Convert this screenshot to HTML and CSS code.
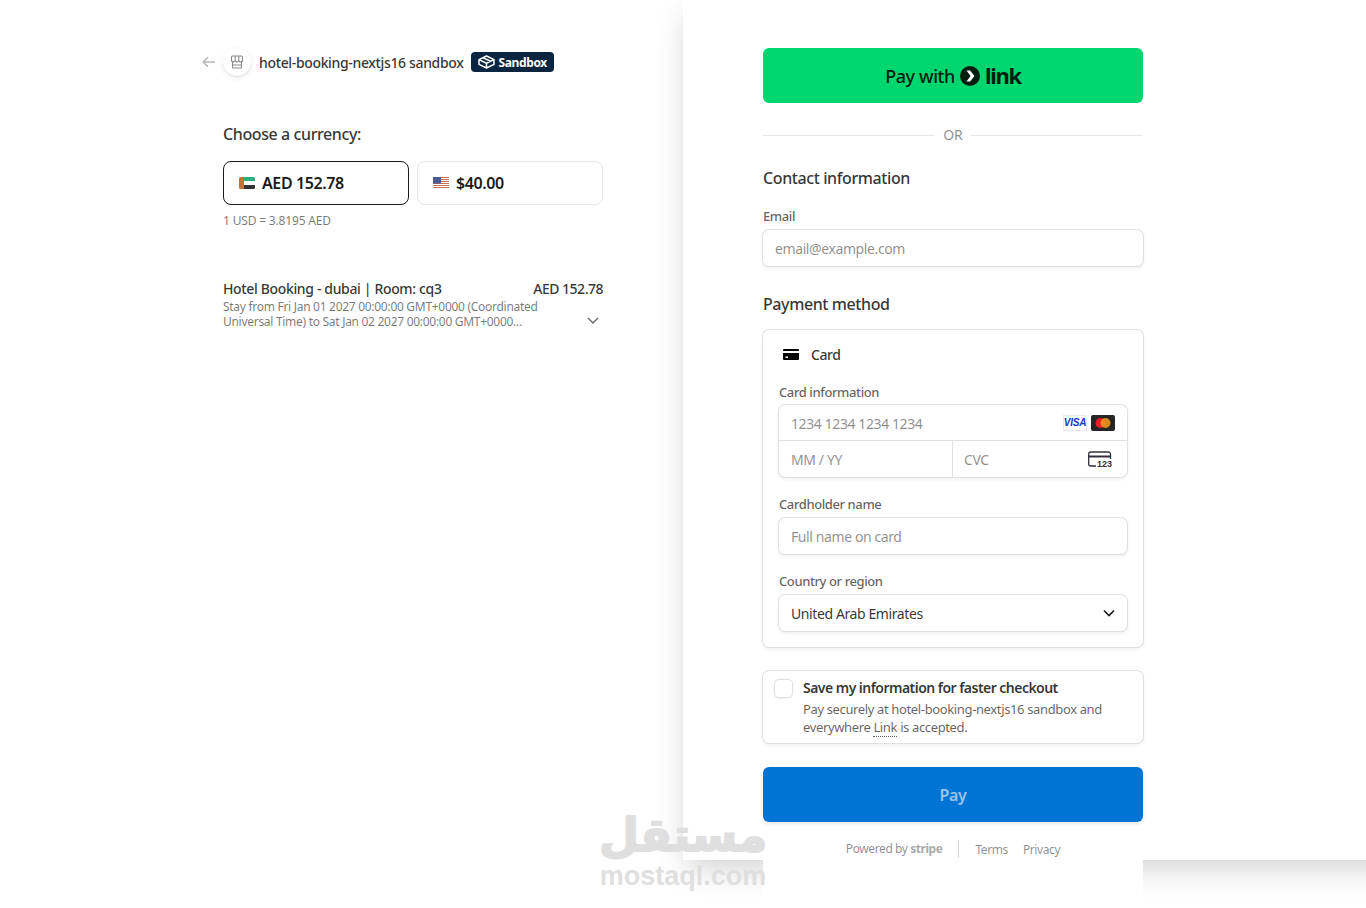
FILE: index.html
```html
<!DOCTYPE html>
<html lang="en">
<head>
<meta charset="utf-8">
<title>Checkout</title>
<link rel="stylesheet" href="styles.css">
</head>
<body>
<main class="page">
  <section class="summary">
    <header class="merchant">
      <svg class="back" width="14" height="12" viewBox="0 0 14 12"><path d="M13 6H1.500M6 1.200 1.200 6 6 10.800" fill="none" stroke="#b5b5b5" stroke-width="1.500"/></svg>
      <span class="store">
        <svg width="14" height="14" viewBox="0 0 14 14"><path d="M2.500 1h9a1 1 0 0 1 1 1v3.500a1.500 1.500 0 0 1-1 1.400V12a1 1 0 0 1-1 1H3.500a1 1 0 0 1-1-1V6.900a1.500 1.500 0 0 1-1-1.400V2a1 1 0 0 1 1-1zM5.200 1v5.500M8.800 1v5.500M1.500 5.500c1 1.800 3 1.800 3.700 0 .7 1.800 2.900 1.800 3.600 0 .7 1.800 2.700 1.800 3.700 0M2.500 10h9" fill="none" stroke="#8a8a8a" stroke-width="1.100"/></svg>
      </span>
      <span class="merchant-name">hotel-booking-nextjs16 sandbox</span>
      <span class="badge">
        <svg width="17" height="14" viewBox="0 0 17 14"><path d="M8.500 1 16 4.600v4.800L8.500 13 1 9.400V4.600zM1 4.600l7.500 3.600L16 4.600M5 2.800l7.500 3.500M8.500 8.200V13" fill="none" stroke="#fff" stroke-width="1.500" stroke-linejoin="round"/></svg>
        Sandbox
      </span>
    </header>

    <h2 class="currency-title">Choose a currency:</h2>
    <div class="currencies">
      <div class="currency active">
        <svg class="flag" width="16" height="12" viewBox="0 0 16 12"><rect width="16" height="12" rx="1.500" fill="#fff"/><path d="M5 0h9.500A1.500 1.500 0 0 1 16 1.500V4H5z" fill="#2bb07f"/><path d="M5 8h11v2.500a1.500 1.500 0 0 1-1.500 1.500H5z" fill="#333"/><path d="M1.500 0H5v12H1.500A1.500 1.500 0 0 1 0 10.500v-9A1.500 1.500 0 0 1 1.500 0z" fill="#c8703a"/></svg>
        AED 152.78
      </div>
      <div class="currency">
        <svg class="flag" width="16" height="12" viewBox="0 0 16 12"><rect width="16" height="12" fill="#fff"/><path d="M0 .5h16M0 2.500h16M0 4.500h16M0 6.500h16M0 8.500h16M0 10.500h16" stroke="#c96f52" stroke-width="1"/><rect width="8" height="6.500" fill="#4a5a92"/></svg>
        $40.00
      </div>
    </div>
    <p class="rate">1 USD = 3.8195 AED</p>

    <div class="item">
      <div class="item-head">
        <span>Hotel Booking - dubai | Room: cq3</span>
        <span class="item-price">AED 152.78</span>
      </div>
      <div class="item-body">
        <p class="item-desc">Stay from Fri Jan 01 2027 00:00:00 GMT+0000 (Coordinated Universal Time) to Sat Jan 02 2027 00:00:00 GMT+0000...</p>
        <svg class="item-chevron" width="12" height="7" viewBox="0 0 12 7"><path d="M1 1l5 5 5-5" fill="none" stroke="#666" stroke-width="1.300"/></svg>
      </div>
    </div>
  </section>

  <section class="pay-panel">
    <div class="form">
      <button class="link-btn" type="button">Pay with
        <svg class="link-mark" width="20" height="20" viewBox="0 0 20 20"><circle cx="10" cy="10" r="10" fill="#011e0f"/><path d="M6.500 4.500h3.600L14.500 10l-4.400 5.500H6.500L10.500 10z" fill="#fff"/></svg>
        <span class="link-word">link</span>
      </button>
      <div class="or"><span>OR</span></div>

      <h2 class="section-title contact">Contact information</h2>
      <label class="label email-label">Email</label>
      <div class="input">email@example.com</div>

      <h2 class="section-title method">Payment method</h2>
      <div class="card-box">
        <div class="card-head">
          <svg width="16" height="11" viewBox="0 0 16 11"><path d="M0 1a1 1 0 0 1 1-1h14a1 1 0 0 1 1 1v1H0zM0 4h16v6a1 1 0 0 1-1 1H1a1 1 0 0 1-1-1zm2.500 3.500v1.500h2.500V7.500z" fill="#000"/></svg>
          <span>Card</span>
        </div>
        <label class="label info-label">Card information</label>
        <div class="card-fields">
          <div class="card-row">
            <span class="card-number">1234 1234 1234 1234</span>
            <span class="brands">
              <span class="visa">VISA</span>
              <svg width="24" height="16" viewBox="0 0 24 16"><rect width="24" height="16" rx="2" fill="#252525"/><circle cx="9.500" cy="8" r="5" fill="#eb1c26"/><circle cx="14.500" cy="8" r="5" fill="#f59e1f" opacity=".85"/></svg>
            </span>
          </div>
          <div class="card-split">
            <div class="card-cell">MM / YY</div>
            <div class="card-cell cvc">CVC
              <span class="cvc-icon">
                <svg width="24" height="16" viewBox="0 0 24 16"><path d="M22.500 9V3A2 2 0 0 0 20.500 1h-18A2 2 0 0 0 .7 3v10a2 2 0 0 0 2 2h6" fill="none" stroke="#30313d" stroke-width="1.300"/><path d="M1 4.500h22v2H1z" fill="#30313d"/></svg>
                <span class="cvc-num">123</span>
              </span>
            </div>
          </div>
        </div>
        <label class="label name-label">Cardholder name</label>
        <div class="input inner">Full name on card</div>
        <label class="label country-label">Country or region</label>
        <div class="input inner select">
          <span>United Arab Emirates</span>
          <svg width="12" height="8" viewBox="0 0 12 8"><path d="M1 1.500l5 5 5-5" fill="none" stroke="#1a1a1a" stroke-width="1.600"/></svg>
        </div>
      </div>

      <div class="save-box">
        <span class="checkbox"></span>
        <div class="save-text">
          <strong>Save my information for faster checkout</strong>
          <p>Pay securely at hotel-booking-nextjs16 sandbox and everywhere <span class="dotted">Link</span> is accepted.</p>
        </div>
      </div>

      <button class="pay-btn" type="button">Pay</button>

      <footer class="foot">
        <span class="powered">Powered by <b>stripe</b></span>
        <span class="foot-links"><span>Terms</span><span>Privacy</span></span>
      </footer>
    </div>
  </section>

  <div class="watermark">
    <span class="wm-ar" dir="rtl" lang="ar">مستقل</span>
    <span class="wm-en">mostaql.com</span>
  </div>
</main>
</body>
</html>
```
FILE: styles.css
```css
* { box-sizing: border-box; }
html, body { margin: 0; height: 908px; overflow: hidden; background: #fff; }
body { font-family: "Noto Sans", "Open Sans", sans-serif; color: #1a1a1a; letter-spacing: -.025em; }
p, h2 { margin: 0; }

.page { position: relative; display: flex; width: 1366px; height: 908px; overflow: hidden; }

/* left */
.summary { width: 683px; flex: none; padding: 48px 80px 0 202px; }
.merchant { display: flex; align-items: center; height: 28px; }
.back { flex: none; }
.store { width: 28px; height: 28px; margin-left: 7px; border-radius: 50%; background: #fff; box-shadow: 0 2px 5px rgba(50,50,93,.1), 0 1px 1px rgba(0,0,0,.07); display: flex; align-items: center; justify-content: center; }
.merchant-name { margin-left: 8px; font-size: 14px; font-weight: 500; letter-spacing: -.025em; color: #1a1a1ae6; white-space: nowrap; }
.badge { margin-left: 8px; height: 20px; padding: 0 7px; display: inline-flex; align-items: center; gap: 3px; background: #0a2540; color: #fff; border-radius: 4px; font-size: 12px; font-weight: 700; letter-spacing: -.03em; }

.currency-title { margin: 47px 0 0 21px; font-size: 16px; line-height: 22px; font-weight: 500; color: #1a1a1ae6; }
.currencies { display: flex; gap: 8px; margin: 16px 0 0 21px; }
.currency { width: 186px; height: 44px; padding-left: 15px; display: flex; align-items: center; gap: 7px; border: 1px solid #e6e6e6; border-radius: 8px; font-size: 16px; font-weight: 600; color: #1a1a1a; }
.currency.active { border-color: #1a1a1a; }
.flag { flex: none; }
.rate { margin: 8px 0 0 21px; font-size: 12px; line-height: 16px; color: #1a1a1a99; letter-spacing: -.014em; }

.item { margin: 51px 0 0 21px; width: 381px; }
.item-head { display: flex; justify-content: space-between; font-size: 14px; line-height: 18px; font-weight: 500; letter-spacing: -.025em; color: #1a1a1ae6; }
.item-price { letter-spacing: -.035em; margin-right: 1px; }
.item-body { position: relative; margin-top: 1px; }
.item-desc { width: 345px; font-size: 12px; line-height: 15px; color: #1a1a1a99; letter-spacing: -.024em; }
.item-chevron { position: absolute; right: 5px; top: 18px; }

/* right */
.pay-panel { flex: 0 0 723px; height: 860px; padding-left: 80px; background: #fff; box-shadow: 0 12px 30px -4px rgba(0,0,0,.18); }
.form { width: 380px; height: 908px; padding-top: 48px; background: #fff; }

button { font-family: inherit; letter-spacing: inherit; border: 0; display: flex; align-items: center; justify-content: center; width: 100%; }
.link-btn { height: 55px; border-radius: 6px; background: #00d66f; color: #011e0f; font-size: 18px; font-weight: 500; gap: 5px; }
.link-word { font-size: 22px; line-height: 24px; margin-top: -2px; font-weight: 700; letter-spacing: -1.300px; }
.or { height: 14px; margin-top: 25px; display: flex; align-items: center; gap: 8px; font-size: 14px; color: #1a1a1a80; letter-spacing: 0; }
.or span { margin-top: -2px; }
.or::before, .or::after { content: ""; flex: 1; height: 1px; background: #e6e6e6; }

.section-title { font-size: 16px; line-height: 22px; font-weight: 500; color: #1a1a1ae6; }
.contact { margin-top: 25px; }
.method { margin-top: 27px; }
.label { display: block; font-size: 13px; line-height: 18px; font-weight: 500; color: #1a1a1ab3; }
.email-label { margin-top: 18px; margin-bottom: 5px; }
.input { height: 36px; padding: 0 12px; display: flex; align-items: center; border-radius: 6px; background: #fff; box-shadow: 0 0 0 1px #e0e0e0, 0 2px 4px rgba(0,0,0,.07), 0 1px 1.500px rgba(0,0,0,.03); font-size: 14px; color: #1a1a1a80; }

.card-box { margin-top: 15px; height: 317px; padding: 0 16px; border-radius: 6px; box-shadow: 0 0 0 1px #e0e0e0, 0 2px 4px rgba(0,0,0,.07); }
.card-head { height: 49px; padding-left: 4px; display: flex; align-items: center; gap: 12px; font-size: 14px; font-weight: 500; color: #1a1a1ae6; }
.info-label { margin-top: 4px; }
.card-fields { margin-top: 4px; border-radius: 6px; box-shadow: 0 0 0 1px #e0e0e0, 0 2px 4px rgba(0,0,0,.07); }
.card-row { height: 36px; padding: 0 12px; display: flex; align-items: center; justify-content: space-between; border-bottom: 1px solid #e0e0e0; font-size: 14px; color: #1a1a1a80; }
.card-number { margin-top: 2px; }
.brands { display: flex; align-items: center; gap: 4px; }
.visa { width: 24px; height: 16px; display: flex; align-items: center; justify-content: center; border: 1px solid #e8e8ee; font: italic 700 10px "Liberation Sans", sans-serif; letter-spacing: -.2px; color: #1434cb; }
.card-split { display: flex; height: 36px; font-size: 14px; color: #1a1a1a80; }
.card-cell { flex: 0 0 173px; padding: 0 12px; display: flex; align-items: center; justify-content: space-between; }
.card-cell + .card-cell { flex: 1; padding: 0 15px 0 11px; border-left: 1px solid #e0e0e0; }
.cvc-icon { position: relative; display: block; width: 24px; height: 16px; }
.cvc-icon svg { display: block; }
.cvc-num { position: absolute; right: 0; bottom: -2px; padding-left: 1px; background: #fff; font: 700 9px/10px "Liberation Sans", sans-serif; letter-spacing: 0; color: #30313d; }
.name-label { margin-top: 18px; margin-bottom: 5px; }
.country-label { margin-top: 18px; margin-bottom: 5px; }
.input.inner { width: 100%; height: 36px; }
.select { justify-content: space-between; color: #1a1a1ae6; }

.save-box { margin-top: 24px; height: 72px; padding: 8px 12px 0 12px; display: flex; gap: 11px; border-radius: 6px; box-shadow: 0 0 0 1px #e0e0e0, 0 2px 4px rgba(0,0,0,.07); }
.checkbox { flex: none; width: 17px; height: 17px; margin-top: 1px; border-radius: 4px; box-shadow: 0 0 0 1px #e0e0e0, 0 1px 3px rgba(0,0,0,.1); }
.save-text strong { display: block; font-size: 14px; line-height: 18px; font-weight: 600; letter-spacing: -.038em; color: #1a1a1ae6; }
.save-text p { margin-top: 3px; font-size: 13px; line-height: 18px; letter-spacing: -.028em; color: #1a1a1ab3; }
.dotted { border-bottom: 1px dotted #1a1a1ab3; }

.pay-btn { height: 55px; margin-top: 24px; border-radius: 6px; background: #0074d4; color: #ffffff99; font-size: 16px; font-weight: 600; box-shadow: 0 2px 4px rgba(0,0,0,.1); }

.foot { margin-top: 18px; height: 18px; display: flex; justify-content: center; align-items: center; font-size: 12px; color: #1a1a1a80; }
.powered { padding-right: 16px; border-right: 1px solid #d8d8d8; line-height: 18px; }
.powered b { font-weight: 700; color: #1a1a1a66; letter-spacing: -.04em; }
.foot-links { display: flex; gap: 15px; padding-left: 16px; }

/* watermark over the page */
.watermark { position: absolute; left: 601px; top: 806px; width: 164px; display: flex; flex-direction: column; align-items: center; color: #dfdfdf; pointer-events: none; letter-spacing: 0; }
.wm-ar { font: 700 46px/58px "DejaVu Sans", sans-serif; -webkit-text-stroke: 2px #dfdfdf; white-space: nowrap; }
.wm-en { font: 700 27px/28px "Liberation Sans", sans-serif; margin-top: -2px; }
```
